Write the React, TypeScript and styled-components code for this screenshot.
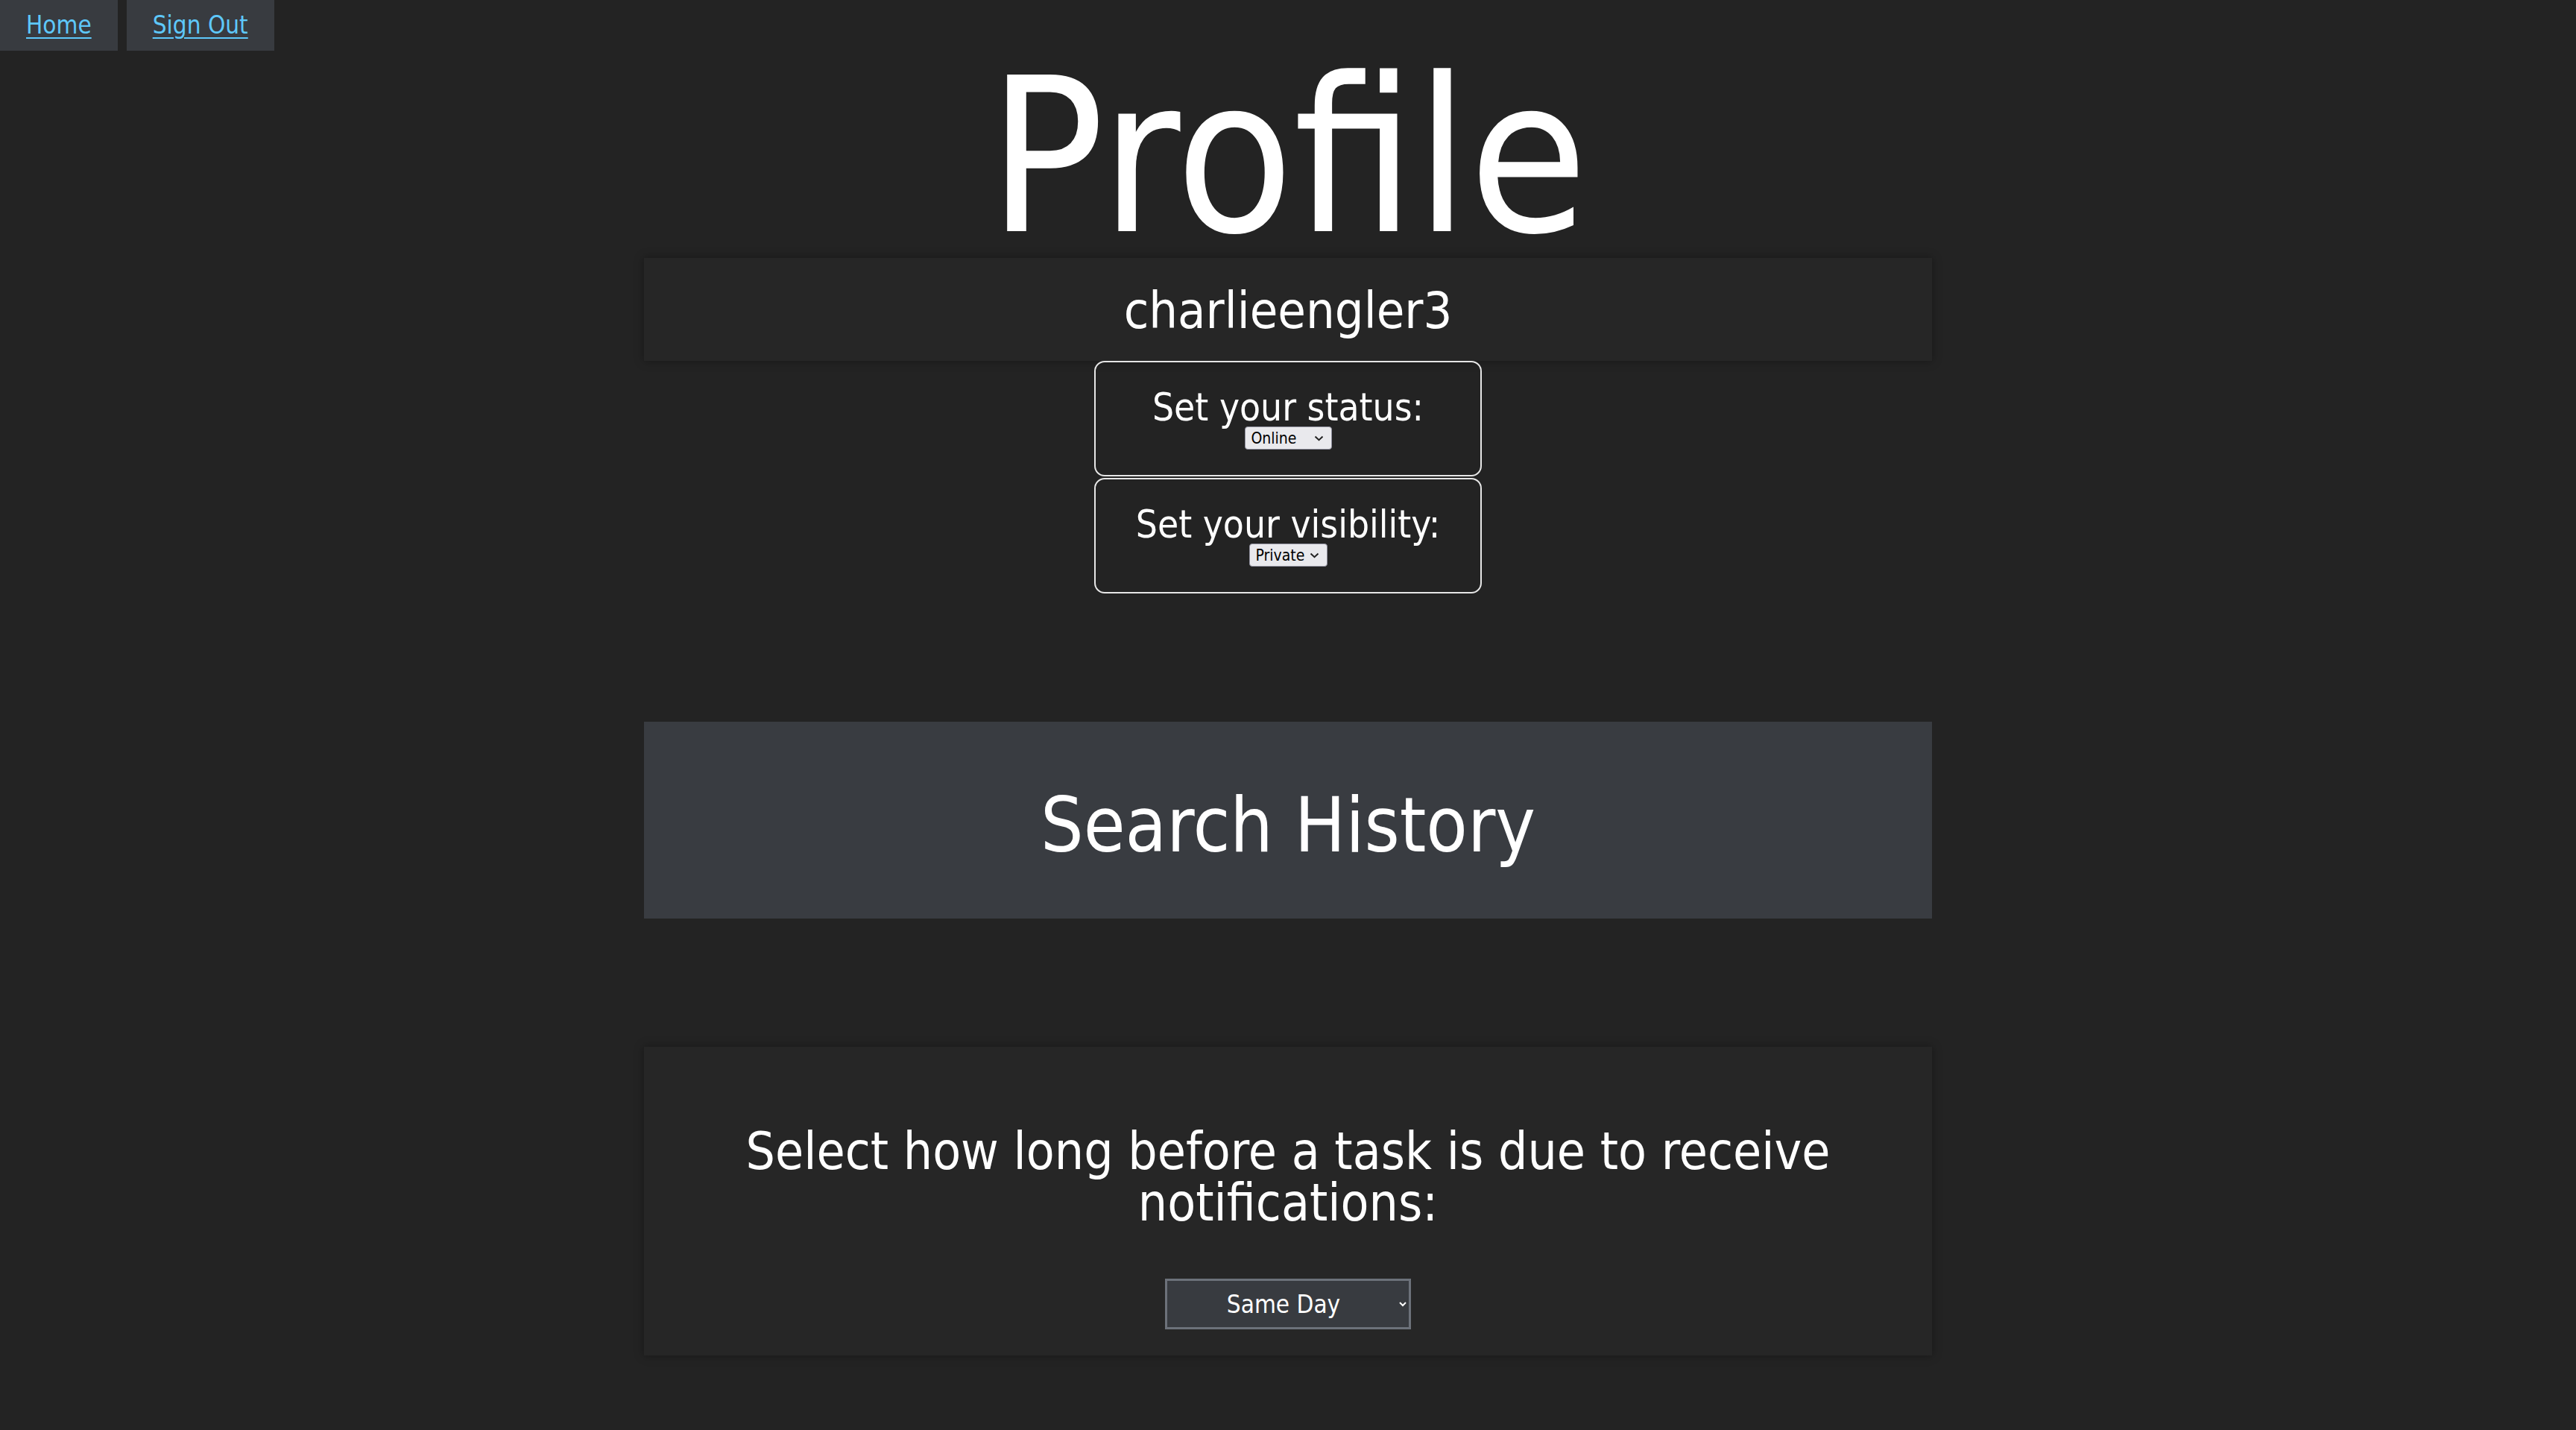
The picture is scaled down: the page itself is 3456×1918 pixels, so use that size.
import { useState } from 'react';
import styled, { createGlobalStyle } from 'styled-components';

const FONT = `"DejaVu Sans Condensed", "DejaVu Sans", Verdana, sans-serif`;

// small dark chevron used on the light selects
const CHEVRON = `url("data:image/svg+xml;utf8,<svg xmlns='http://www.w3.org/2000/svg' width='13' height='8' viewBox='0 0 13 8'><path d='M1.5 1.5 L6.5 6.2 L11.5 1.5' fill='none' stroke='%23222' stroke-width='2'/></svg>")`;

const GlobalStyle = createGlobalStyle`
  html, body {
    margin: 0;
    padding: 0;
    background-color: #232323;
    color: #ffffff;
    font-family: ${FONT};
    font-stretch: condensed;
  }
`;

const Page = styled.div`
  min-height: 1918px;
  padding-bottom: 60px;
`;

// --------------------------
// TOP NAV
// --------------------------
const Nav = styled.nav`
  display: flex;
  gap: 12px;
  height: 68px;
`;

const NavButton = styled.div`
  display: flex;
  align-items: center;
  height: 68px;
  padding: 0 35px;
  background-color: #383b40;
`;

const NavLink = styled.a`
  color: #5ec8fb;
  font-size: 33px;
  line-height: 68px;
  text-decoration: underline;
  text-underline-offset: 5px;
  text-decoration-thickness: 2px;
  cursor: pointer;
`;

// --------------------------
// MAIN COLUMN
// --------------------------
const Column = styled.main`
  width: 1728px;
  margin: 0 auto;
  display: flex;
  flex-direction: column;
  align-items: center;
`;

const Title = styled.h1`
  margin: 6px 0 -1px;
  font-size: 288px;
  font-weight: 400;
  line-height: 273px;
  text-align: center;
`;

const UserCard = styled.div`
  width: 100%;
  height: 138px;
  box-sizing: border-box;
  padding-top: 4px;
  background-color: #262626;
  box-shadow: 0 0 12px rgba(0, 0, 0, 0.35);
  text-align: center;
  font-size: 68px;
  line-height: 134px;
`;

const SettingBox = styled.div<{ $gap?: number }>`
  width: 520px;
  box-sizing: border-box;
  margin-top: ${(p) => p.$gap ?? 0}px;
  padding: 35px 0 34px;
  border: 2px solid #e6e6e6;
  border-radius: 14px;
  display: flex;
  flex-direction: column;
  align-items: center;
`;

const SettingLabel = styled.div`
  font-size: 51px;
  line-height: 52px;
  white-space: nowrap;
`;

const SmallSelect = styled.select<{ $width: number }>`
  appearance: none;
  width: ${(p) => p.$width}px;
  height: 31px;
  margin-top: -1px;
  padding: 0 0 0 8px;
  font-family: ${FONT};
  font-size: 21px;
  color: #000;
  background-color: #e9e9ed;
  background-image: ${CHEVRON};
  background-repeat: no-repeat;
  background-position: right 10px center;
  border: 1px solid #8f8f9d;
  border-radius: 4px;
`;

const HistoryPanel = styled.section`
  width: 100%;
  height: 264px;
  box-sizing: border-box;
  margin-top: 172px;
  padding-top: 14px;
  background-color: #393c41;
  text-align: center;
  font-size: 101px;
  line-height: 250px;
`;

const NotifyCard = styled.section`
  width: 100%;
  box-sizing: border-box;
  margin-top: 172px;
  padding: 106px 40px 35px;
  background-color: #262626;
  box-shadow: 0 0 12px rgba(0, 0, 0, 0.35);
  display: flex;
  flex-direction: column;
  align-items: center;
`;

const NotifyText = styled.h2`
  margin: 0;
  font-size: 69px;
  font-weight: 400;
  line-height: 69px;
  text-align: center;
`;

const DueSelect = styled.select`
  width: 330px;
  height: 68px;
  margin-top: 67px;
  box-sizing: border-box;
  font-family: ${FONT};
  font-size: 33px;
  color: #ffffff;
  background-color: #383b40;
  border: 3px solid #6c717a;
  border-radius: 0;
  text-align: center;
  text-align-last: center;
`;

const App = () => {
  const [status, setStatus] = useState('online');
  const [visibility, setVisibility] = useState('private');
  const [due, setDue] = useState('same');

  return (
    <Page>
      <GlobalStyle />
      <Nav>
        <NavButton>
          <NavLink href="#">Home</NavLink>
        </NavButton>
        <NavButton>
          <NavLink href="#">Sign Out</NavLink>
        </NavButton>
      </Nav>

      <Column>
        <Title>Profile</Title>
        <UserCard>charlieengler3</UserCard>

        <SettingBox>
          <SettingLabel>Set your status:</SettingLabel>
          <SmallSelect $width={117} value={status} onChange={(e) => setStatus(e.target.value)}>
            <option value="online">Online</option>
            <option value="away">Away</option>
            <option value="offline">Offline</option>
          </SmallSelect>
        </SettingBox>
        <SettingBox $gap={2}>
          <SettingLabel>Set your visibility:</SettingLabel>
          <SmallSelect $width={105} value={visibility} onChange={(e) => setVisibility(e.target.value)}>
            <option value="private">Private</option>
            <option value="public">Public</option>
          </SmallSelect>
        </SettingBox>

        <HistoryPanel>Search History</HistoryPanel>

        <NotifyCard>
          <NotifyText>
            Select how long before a task is due to receive notifications:
          </NotifyText>
          <DueSelect value={due} onChange={(e) => setDue(e.target.value)}>
            <option value="same">Same Day</option>
            <option value="one">One Day</option>
            <option value="week">One Week</option>
          </DueSelect>
        </NotifyCard>
      </Column>
    </Page>
  );
};

export default App;
